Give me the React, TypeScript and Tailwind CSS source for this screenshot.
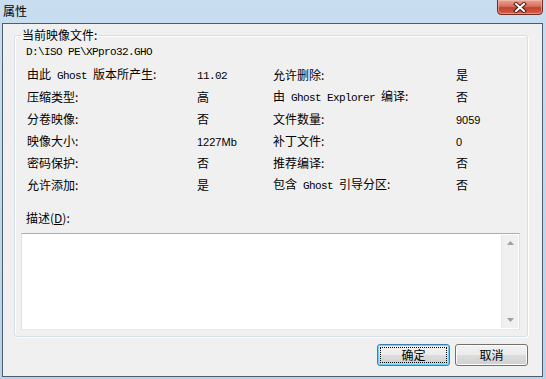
import React from "react";

const CJK = "font-['Noto_Sans_CJK_SC','Noto_Sans',sans-serif]";

function Mono({ children }: { children: React.ReactNode }) {
  return (
    <span className="font-['Liberation_Mono',monospace] text-[11px] tracking-[-0.6px]">
      {children}
    </span>
  );
}

function Num({ children }: { children: React.ReactNode }) {
  return <span className="font-['Liberation_Sans',sans-serif] text-[11px]">{children}</span>;
}

const ROWS: [React.ReactNode, React.ReactNode, React.ReactNode, React.ReactNode][] = [
  [<>由此<Mono>{" Ghost "}</Mono>版本所产生:</>, <Mono>11.02</Mono>, "允许删除:", "是"],
  ["压缩类型:", "高", <>由<Mono>{" Ghost Explorer "}</Mono>编译:</>, "否"],
  ["分卷映像:", "否", "文件数量:", <Num>9059</Num>],
  ["映像大小:", <Num>1227Mb</Num>, "补丁文件:", <Num>0</Num>],
  ["密码保护:", "否", "推荐编译:", "否"],
  ["允许添加:", "是", <>包含<Mono>{" Ghost "}</Mono>引导分区:</>, "否"],
];

function CloseButton() {
  return (
    <div className="w-[46px] h-[16px] mt-[-1px] rounded-b-[4px] border border-[#6e2a22] bg-[linear-gradient(to_bottom,#e8a294_0%,#d8705f_45%,#c4402c_55%,#d0624c_100%)] shadow-[inset_0_0_0_1px_rgba(255,200,190,0.5)] flex items-center justify-center">
      <svg width="14" height="11" viewBox="0 0 14 11">
        <path d="M3 2 L11 9 M11 2 L3 9" stroke="#4a1a14" strokeWidth="4" strokeLinecap="square" />
        <path d="M3 2 L11 9 M11 2 L3 9" stroke="#ffffff" strokeWidth="2" strokeLinecap="square" />
      </svg>
    </div>
  );
}

function Button({ label, focused }: { label: string; focused?: boolean }) {
  return (
    <button
      className={`w-[73px] h-[22px] rounded-[3px] border p-[2px] bg-[linear-gradient(to_bottom,#f2f2f2_0%,#ebebeb_50%,#dddddd_50%,#cfcfcf_100%)] ${
        focused ? "border-[#3c7fb1] shadow-[inset_0_0_0_1px_#6fd0f7]" : "border-[#707070] shadow-[inset_0_0_0_1px_#fcfcfc]"
      }`}
    >
      <div
        className={`w-full h-full flex items-center justify-center text-[12px] leading-none text-black ${
          focused ? "border border-dotted border-black" : ""
        }`}
      >
        {label}
      </div>
    </button>
  );
}

export default function App() {
  return (
    <div className={`w-[546px] h-[379px] overflow-hidden bg-[linear-gradient(to_bottom,#c9ddf1,#b9d2ea)] flex flex-col text-black ${CJK}`}>
      <div className="h-[23px] flex items-start justify-between pl-[3px] pr-[3px]">
        <span className="text-[12px] leading-none pt-[5px]">属性</span>
        <CloseButton />
      </div>
      <div className="ml-[2px] mr-[3px] h-[354px] border border-[#4d5d6e] bg-[#f0f0f0] flex flex-col">
        <fieldset className="ml-[11px] mr-[14px] mt-[4px] p-0 border border-[#d5dfe5] rounded-[3px] shadow-[inset_1px_1px_0_#ffffff,1px_1px_0_#ffffff] min-w-0">
          <legend className="ml-[6px] px-[1px] text-[12px] leading-[14px]">当前映像文件:</legend>
          <div className="mt-[1px] ml-[11px] h-[14px] leading-[14px] text-[12px]">
            <Mono>D:\ISO PE\XPpro32.GHO</Mono>
          </div>
          <div className="mt-[7px] ml-[12px] grid grid-cols-[170px_76px_183px_auto] auto-rows-[22px] text-[12px]">
            {ROWS.map((r, i) => (
              <React.Fragment key={i}>
                {r.map((c, j) => (
                  <div key={j} className="flex items-center whitespace-pre">
                    <span>{c}</span>
                  </div>
                ))}
              </React.Fragment>
            ))}
          </div>
          <div className="mt-[15px] ml-[11px] h-[14px] leading-[14px] text-[12px]">
            描述(<span className="underline">D</span>):
          </div>
          <div className="mt-[8px] ml-[6px] mr-[7px] mb-[6px] h-[97px] border border-[#abadb3] border-x-[#dbdfe6] border-b-[#e3e9ef] bg-white flex justify-end p-[1px]">
            <div className="w-[17px] h-full bg-[#f0f0f0] border-l border-[#e6e6e6] flex flex-col items-center justify-between py-[6px]">
              <svg width="7" height="4" viewBox="0 0 7 4">
                <path d="M0 4 L3.5 0 L7 4 Z" fill="#a0a0a0" />
              </svg>
              <svg width="7" height="4" viewBox="0 0 7 4">
                <path d="M0 0 L3.5 4 L7 0 Z" fill="#a0a0a0" />
              </svg>
            </div>
          </div>
        </fieldset>
        <div className="mt-[7px] mr-[14px] flex justify-end gap-[5px]">
          <Button label="确定" focused />
          <Button label="取消" />
        </div>
      </div>
    </div>
  );
}
